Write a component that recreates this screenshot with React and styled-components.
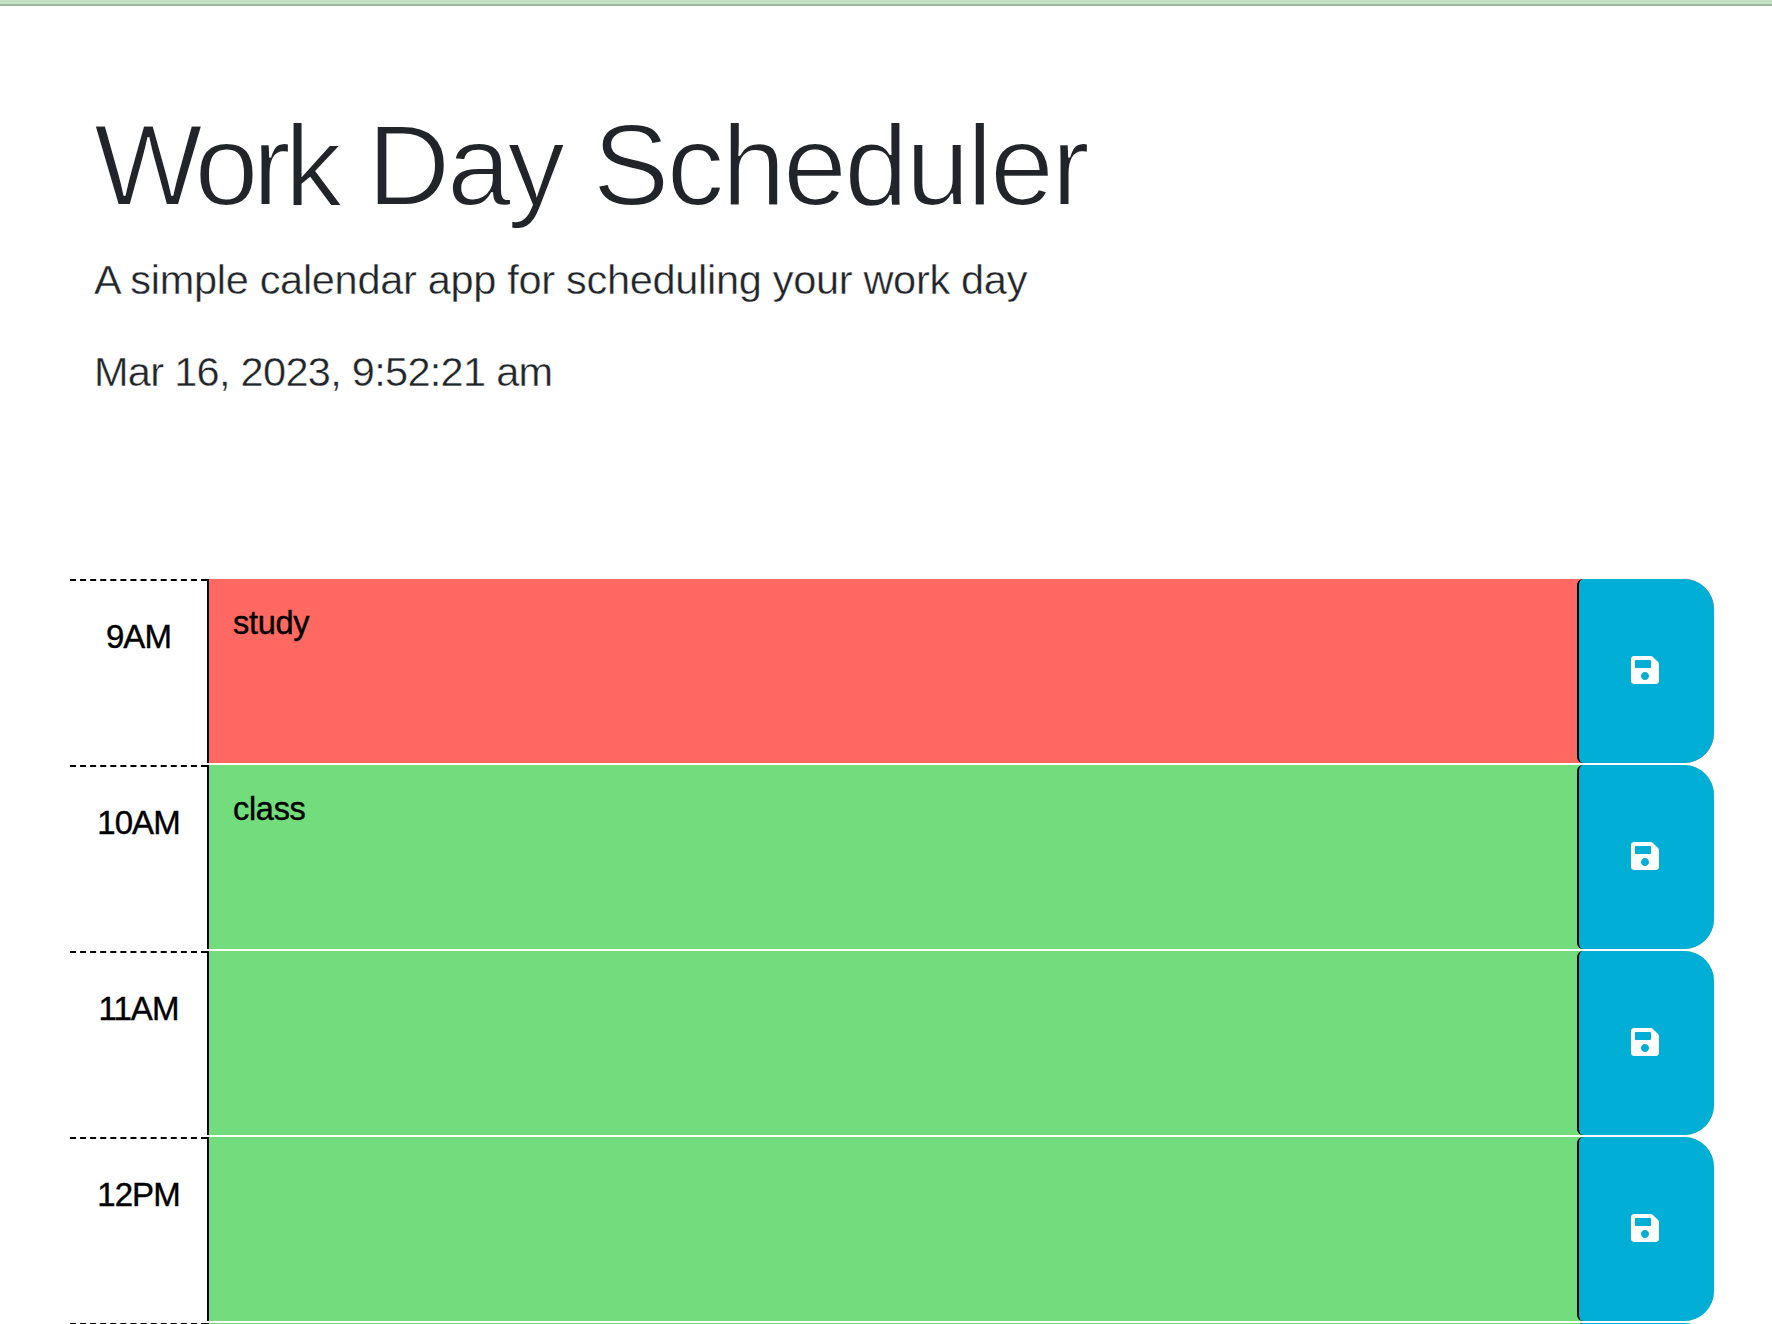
import React from "react";
import styled, { createGlobalStyle } from "styled-components";
import { FaSave } from "react-icons/fa";

const GlobalStyle = createGlobalStyle`
  * { box-sizing: border-box; }
  body {
    margin: 0;
    background: #fff;
    color: #212529;
    font-family: "Liberation Sans", Arial, sans-serif;
  }
`;

const Page = styled.div`
  height: 1324px;
  overflow: hidden;
`;

const TopStrip = styled.div`
  height: 6px;
  background: #c3e1c5;
  border-bottom: 2px solid #9db4a0;
`;

const Header = styled.header`
  height: 573px;
  padding: 92px 94px 0;
`;

const Title = styled.h1`
  margin: 0;
  font-size: 115px;
  line-height: 134px;
  font-weight: 400;
  white-space: nowrap;
  letter-spacing: -3.4px;
  word-spacing: 2.5px;
  -webkit-text-stroke: 2px #fff;
`;

const Tracked = styled.span`
  letter-spacing: ${(p) => p.$spacing}px;
`;

const Lead = styled.p`
  margin: ${(p) => p.$gap}px 0 0;
  font-size: 41.5px;
  line-height: 60px;
  white-space: nowrap;
  letter-spacing: ${(p) => p.$spacing}px;
  -webkit-text-stroke: 0.4px #fff;
`;

const Schedule = styled.main`
  display: flex;
  flex-direction: column;
  gap: 2px;
  padding: 0 58px 0 70px;
`;

const TimeBlock = styled.section`
  display: flex;
  flex: none;
  height: 184px;
  border-radius: 0 30px 30px 0;
`;

const Hour = styled.div`
  width: 137px;
  padding-top: 32px;
  border-top: 2px dashed #000;
  color: #000;
  font-size: 33px;
  line-height: 48px;
  letter-spacing: -0.9px;
  text-align: center;
  -webkit-text-stroke: 0.4px #000;
`;

const Slot = styled.div`
  flex: 1;
  display: flex;
  border-left: 2px solid #000;
  border-radius: 0 30px 30px 0;
  background: ${(p) => (p.$present ? "#ff6961" : "#73dd7e")};
`;

const Description = styled.div`
  flex: 1;
  padding: 20px 24px;
  color: #000;
  font-size: 32.5px;
  line-height: 48px;
  letter-spacing: -0.3px;
  -webkit-text-stroke: 0.4px #000;
`;

const SaveButton = styled.button`
  display: flex;
  align-items: center;
  justify-content: center;
  width: 137px;
  padding: 0 3px 2px 0;
  border: 0;
  border-left: 2px solid #000;
  border-radius: 6px 30px 30px 6px;
  background: #00aed6;
  color: #fff;
  font-size: 32px;
`;

const blocks = [
  { id: 9, hour: "9AM", text: "study", present: true },
  { id: 10, hour: "10AM", text: "class" },
  { id: 11, hour: "11AM", text: "" },
  { id: 12, hour: "12PM", text: "" },
  { id: 13, hour: "", text: "" },
];

export default function App() {
  return (
    <Page>
      <GlobalStyle />
      <TopStrip />
      <Header>
        <Title>
          <Tracked $spacing={-6}>Work</Tracked> Day <Tracked $spacing={-2.6}>Scheduler</Tracked>
        </Title>
        <Lead $gap={18} $spacing={-0.3}>A simple calendar app for scheduling your work day</Lead>
        <Lead $gap={32} $spacing={-0.7}>Mar 16, 2023, 9:52:21 am</Lead>
      </Header>
      <Schedule>
        {blocks.map((b) => (
          <TimeBlock key={b.id}>
            <Hour>{b.hour}</Hour>
            <Slot $present={b.present}>
              <Description>{b.text}</Description>
              <SaveButton aria-label="Save">
                <FaSave />
              </SaveButton>
            </Slot>
          </TimeBlock>
        ))}
      </Schedule>
    </Page>
  );
}
